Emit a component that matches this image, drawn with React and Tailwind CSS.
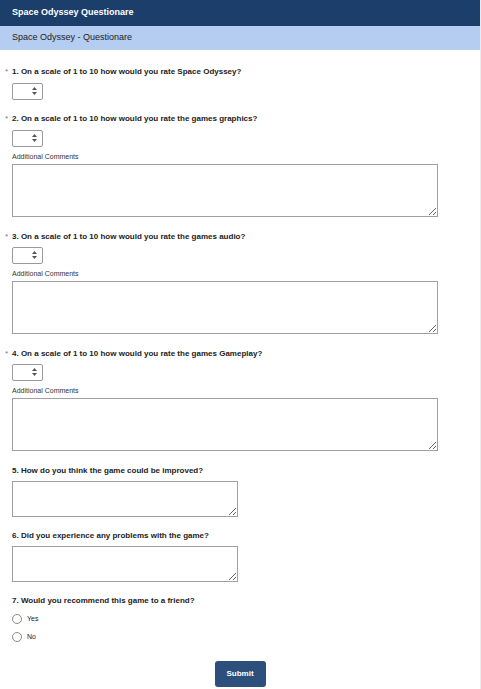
import React, { useState } from 'react';

const font = { fontFamily: '"Liberation Sans", Arial, sans-serif' };

const Arrows = () => (
  <svg width="5" height="8" viewBox="0 0 5 8" className="pointer-events-none absolute right-[6px] top-[4px]">
    <path d="M2.5 0 L5 3 L0 3 Z" fill="#555" />
    <path d="M2.5 8 L5 5 L0 5 Z" fill="#555" />
  </svg>
);

const Rating = () => (
  <div className="relative w-[31px] h-[17px]">
    <select className="block appearance-none w-full h-full p-0 border border-[#9a9a9a] rounded-[2px] bg-white text-[8px] outline-none">
      <option value=""></option>
      {[1, 2, 3, 4, 5, 6, 7, 8, 9, 10].map((n) => (
        <option key={n} value={n}>{n}</option>
      ))}
    </select>
    <Arrows />
  </div>
);

const Label = ({ required, children, className = '' }) => (
  <div className={`flex items-center text-[8px] leading-[10px] font-bold text-[#222] ${className}`}>
    {required && <span className="w-[7px] -ml-[7px] text-[#777] font-normal">*</span>}
    <span>{children}</span>
  </div>
);

const Comments = () => (
  <>
    <div className="mt-[6px] text-[7px] leading-[8px] text-[#333]">Additional Comments</div>
    <textarea className="block mt-[3px] w-[426px] h-[53px] border border-[#a0a0a0] outline-none" />
  </>
);

const App = () => {
  const [recommend, setRecommend] = useState('');

  return (
    <div className="min-h-[689px] w-full bg-white border-r border-[#ececec]" style={font}>
      <div className="h-[26px] bg-[#1b3e6b] px-3 flex items-center text-white text-[9px] font-bold">
        Space Odyssey Questionare
      </div>
      <div className="h-[24px] bg-[#b4cdf1] px-3 flex items-center text-[#222] text-[9px]">
        Space Odyssey - Questionare
      </div>

      <form className="px-3 pt-[17px] pb-[3px]" onSubmit={(e) => e.preventDefault()}>
        {/* Q1 */}
        <Label required>1. On a scale of 1 to 10 how would you rate Space Odyssey?</Label>
        <div className="mt-[6px]"><Rating /></div>

        {/* Q2 */}
        <Label required className="mt-[14px]">2. On a scale of 1 to 10 how would you rate the games graphics?</Label>
        <div className="mt-[6px]"><Rating /></div>
        <Comments />

        {/* Q3 */}
        <Label required className="mt-[15px]">3. On a scale of 1 to 10 how would you rate the games audio?</Label>
        <div className="mt-[5px]"><Rating /></div>
        <Comments />

        {/* Q4 */}
        <Label required className="mt-[15px]">4. On a scale of 1 to 10 how would you rate the games Gameplay?</Label>
        <div className="mt-[5px]"><Rating /></div>
        <Comments />

        {/* Q5 */}
        <Label className="mt-[15px]">5. How do you think the game could be improved?</Label>
        <textarea className="block mt-[5px] w-[226px] h-[36px] border border-[#a0a0a0] outline-none" />

        {/* Q6 */}
        <Label className="mt-[14px]">6. Did you experience any problems with the game?</Label>
        <textarea className="block mt-[5px] w-[226px] h-[36px] border border-[#a0a0a0] outline-none" />

        {/* Q7 */}
        <Label className="mt-[14px]">7. Would you recommend this game to a friend?</Label>
        <div className="mt-[8px] flex flex-col gap-[8px]">
          {['Yes', 'No'].map((opt) => (
            <label key={opt} className="flex items-center gap-[5px] text-[7px] leading-[10px] text-[#222]">
              <input
                type="radio"
                name="recommend"
                checked={recommend === opt}
                onChange={() => setRecommend(opt)}
                className="appearance-none m-0 w-[10px] h-[10px] rounded-full border border-[#8a8a8a] bg-white checked:bg-[#2d4f7c]"
              />
              {opt}
            </label>
          ))}
        </div>

        <div className="mt-[19px] flex justify-center">
          <button
            type="submit"
            className="w-[51px] h-[26px] rounded-[3px] bg-[#2d4f7c] text-white text-[8px] font-bold"
          >
            Submit
          </button>
        </div>
      </form>
    </div>
  );
};

export default App;
